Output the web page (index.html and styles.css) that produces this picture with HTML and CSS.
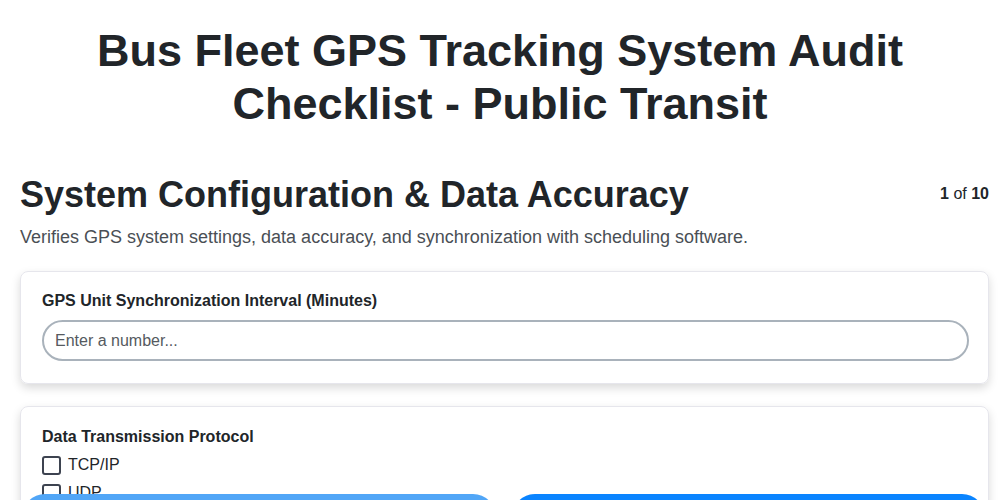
FILE: index.html
```html
<!DOCTYPE html>
<html lang="en">
  <head>
    <meta charset="UTF-8" />
    <meta name="viewport" content="width=device-width, initial-scale=1.0" />
    <title>Bus Fleet GPS Tracking System Audit</title>
    <link rel="stylesheet" href="styles.css">
  </head>
  <body>
    <h1 class="title">Bus Fleet GPS Tracking System Audit Checklist - Public Transit</h1>
    <div class="con">
      <div class="sectionHead">
        <h2>System Configuration &amp; Data Accuracy</h2>
        <span class="count"><b>1</b> of <b>10</b></span>
      </div>
      <p class="desc">Verifies GPS system settings, data accuracy, and synchronization with scheduling software.</p>

      <div class="card">
        <label class="qLabel" for="interval">GPS Unit Synchronization Interval (Minutes)</label>
        <input class="numInput" id="interval" type="text" placeholder="Enter a number..." />
      </div>

      <div class="card">
        <p class="qLabel">Data Transmission Protocol</p>
        <label class="opt"><input type="checkbox" /> TCP/IP</label>
        <label class="opt"><input type="checkbox" /> UDP</label>
        <label class="opt"><input type="checkbox" /> MQTT</label>
        <label class="opt"><input type="checkbox" /> HTTP/HTTPS</label>
      </div>
    </div>

    <div class="navBar">
      <button class="navBtn prev">Previous</button>
      <button class="navBtn next">Next</button>
    </div>
  </body>
</html>
```

FILE: styles.css
```css
body {
  margin: 0;
  font-family: "Liberation Sans", Arial, sans-serif;
  color: #212529;
  background-color: #fff;
}

.title {
  text-align: center;
  font-size: 45px;
  line-height: 53px;
  margin: 24px 80px 43px;
}

.con {
  padding: 0 11px 80px 20px;
}

.sectionHead {
  display: flex;
  justify-content: space-between;
  align-items: flex-start;
}

.sectionHead h2 {
  font-size: 36px;
  line-height: 43px;
  margin: 0;
}

.count {
  font-size: 16px;
  margin-top: 12px;
}

.desc {
  font-size: 18px;
  color: #4a4f55;
  margin: 11px 0 23px;
}

.card {
  border: 1px solid #e6e6ec;
  border-radius: 8px;
  box-shadow: 0 4px 10px rgba(0, 0, 0, 0.15);
  padding: 18px 19px 22px 21px;
  margin-bottom: 22px;
  display: flex;
  flex-direction: column;
}

.qLabel {
  font-weight: bold;
  font-size: 16px;
  margin: 2px 0 10px;
}

p.qLabel {
  margin: 3px 0 5px;
}

.numInput {
  font-family: inherit;
  font-size: 16px;
  color: #212529;
  height: 41px;
  box-sizing: border-box;
  border: 2px solid #a9b2bb;
  border-radius: 21px;
  padding: 0 11px;
}

.numInput::placeholder {
  color: #555a60;
}

.opt {
  display: flex;
  align-items: center;
  gap: 7px;
  font-size: 16px;
  height: 28px;
}

.opt input {
  appearance: none;
  width: 19px;
  height: 19px;
  margin: 0;
  border: 2px solid #3d4350;
  border-radius: 3px;
}

.navBar {
  position: fixed;
  left: 22px;
  right: 15px;
  bottom: -40px;
  display: flex;
  gap: 16px;
}

.navBtn {
  flex: 1;
  height: 46px;
  border: none;
  border-radius: 23px;
  color: #fff;
  font-size: 16px;
  font-family: inherit;
}

.prev {
  background-color: #51a6f7;
}

.next {
  background-color: #0a84ff;
}
```
